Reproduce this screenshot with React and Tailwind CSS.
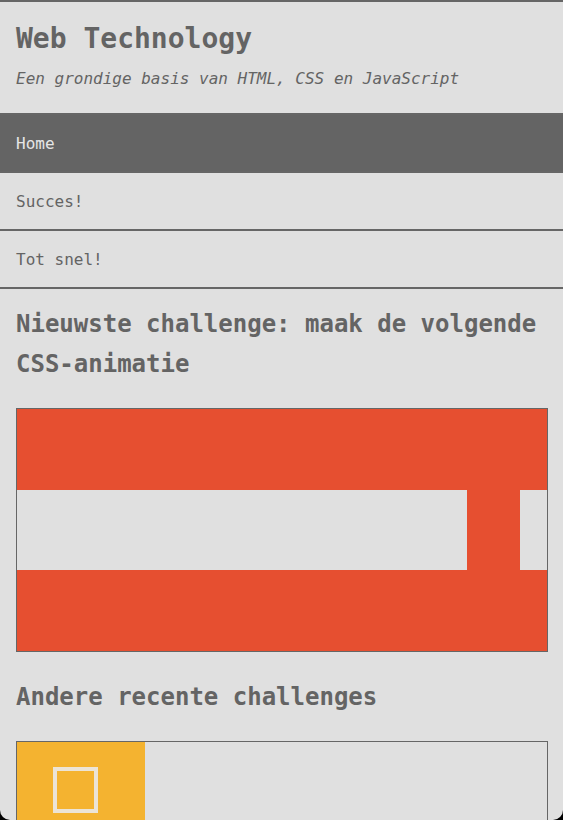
import React from "react";

const navItems = [
  { label: "Home", active: true },
  { label: "Succes!", active: false },
  { label: "Tot snel!", active: false },
];

const App = () => {
  return (
    <div className="bg-black">
      <div
        className="h-[820px] overflow-hidden rounded-b-[10px] border-t-2 border-[#666666] bg-[#e0e0e0] text-[#646464]"
        style={{ fontFamily: '"DejaVu Sans Mono", "Liberation Mono", monospace' }}
      >
        {/* HEADER */}
        <header className="px-4 pt-4 pb-[22px]">
          <h1 className="text-[28px] leading-[42px] font-bold">Web Technology</h1>
          <p className="mt-[7px] text-[16px] leading-6 italic">
            Een grondige basis van HTML, CSS en JavaScript
          </p>
        </header>

        {/* NAV */}
        <nav>
          <ul className="border-t-2 border-[#666666]">
            {navItems.map((item) => (
              <li
                key={item.label}
                className={`h-[58px] border-b-2 border-[#666666] px-4 pt-[2px] flex items-center text-[16px] ${
                  item.active ? "bg-[#646464] text-[#e6e6e6]" : ""
                }`}
              >
                {item.label}
              </li>
            ))}
          </ul>
        </nav>

        {/* MAIN */}
        <main className="pl-4 pr-[15px]">
          <h2 className="mt-[15px] text-[24px] leading-[40px] font-bold">
            Nieuwste challenge: maak de volgende CSS-animatie
          </h2>

          <div className="mt-6 h-[244px] border border-[#666666] flex flex-col">
            <div className="flex-1 bg-[#e64f30]" />
            <div className="flex-1 flex">
              <div className="flex-1 bg-[#e0e0e0]" />
              <div className="w-[53px] bg-[#e64f30]" />
              <div className="w-[27px] bg-[#e0e0e0]" />
            </div>
            <div className="flex-1 bg-[#e64f30]" />
          </div>

          <h2 className="mt-[25px] text-[24px] leading-[40px] font-bold">
            Andere recente challenges
          </h2>

          <div className="mt-6 border border-[#666666] flex h-[140px]">
            <div className="w-[128px] bg-[#f4b330] pt-[25px] pl-[36px]">
              <div className="w-[45px] h-[46px] border-4 border-[#ece4d6]" />
            </div>
            <div className="flex-1" />
          </div>
        </main>
      </div>
    </div>
  );
};

export default App;
